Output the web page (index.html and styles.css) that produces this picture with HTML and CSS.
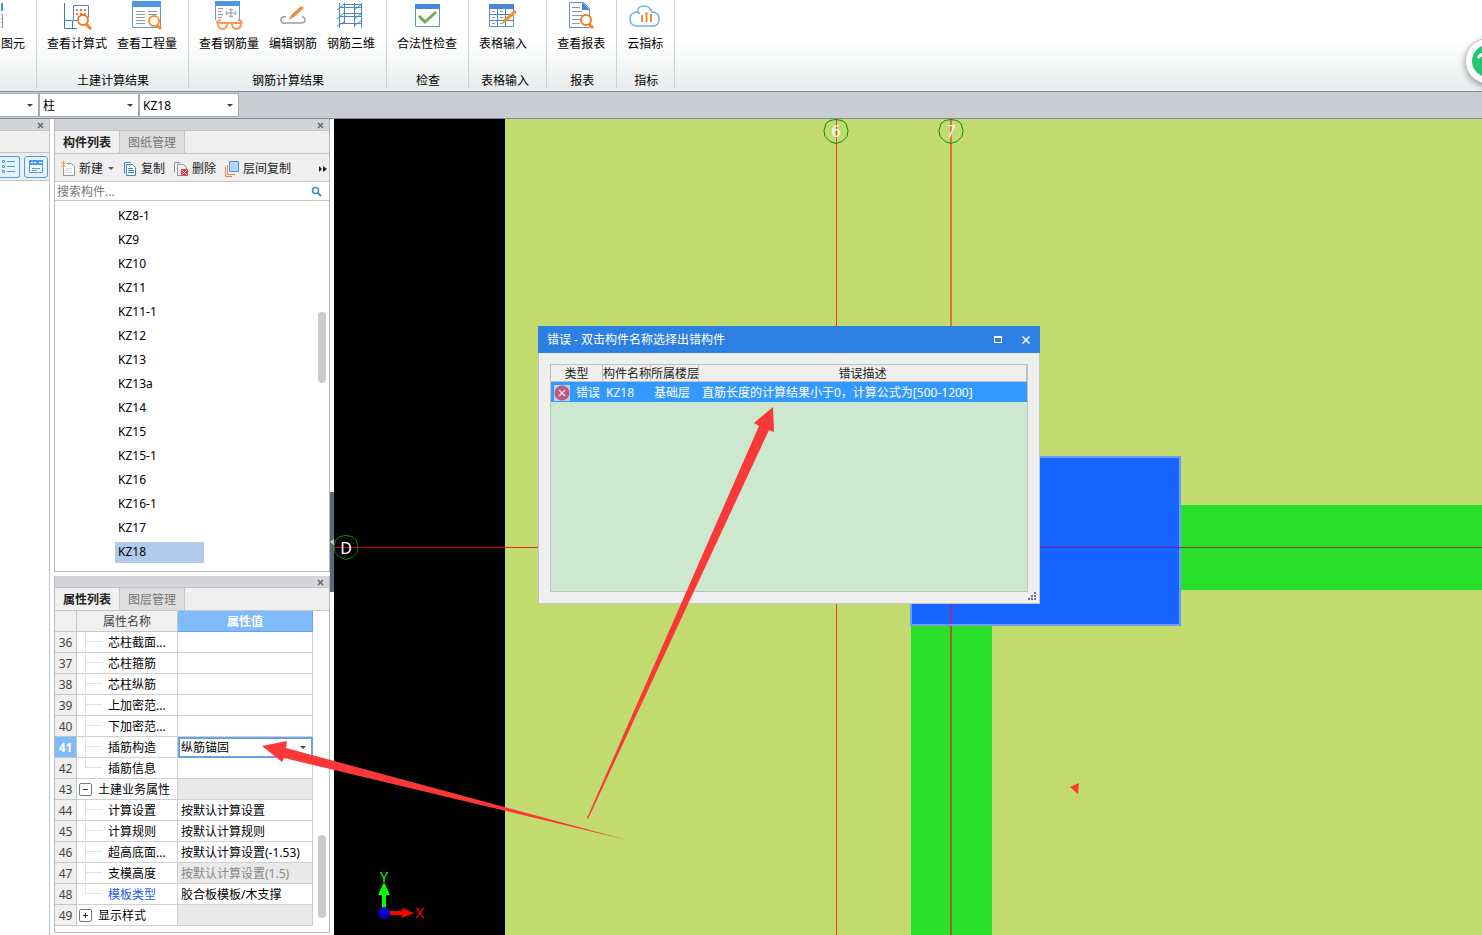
FILE: index.html
```html
<!DOCTYPE html>
<html lang="zh-CN">
<head>
<meta charset="utf-8">
<title>构件建模</title>
<link rel="stylesheet" href="styles.css">
</head>
<body>
<header class="ribbon">
  <section class="group group-cut">
    <div class="tools"><button class="tool"><svg width="24" height="32"><path d="M0 3h2v8H0z" fill="#4a90e2"/><path d="M0 14.500h1.500v13H0M0 18.500h1M0 22.500h1" fill="none" stroke="#8b98a5"/></svg><span>图元</span></button></div>
  </section>
  <section class="group">
    <div class="tools">
      <button class="tool"><svg width="32" height="32"><path d="M3.500 3v25.500H16M3.500 20.500h8v8" fill="none" stroke="#3b7dc4"/><path d="M16 20.500h-3.500v-15h15v12" fill="none" stroke="#4a86c8"/><path d="M15 9h2v2h-2zM19 9h2v2h-2zM23 9h2v2h-2zM15 13h2v2h-2zM19 13h2v2h-2zM23 13h2v2h-2z" fill="#e8743a"/><circle cx="22" cy="20" r="5" fill="#fff" stroke="#f07c28" stroke-width="2"/><path d="M25 24l5 5" stroke="#f07c28" stroke-width="3"/></svg><span>查看计算式</span></button>
      <button class="tool"><svg width="32" height="32"><path d="M1.500 1.500h28v26h-28z" fill="#fff" stroke="#5b9be0"/><path d="M1 1h29v6H1z" fill="#4f95e3"/><path d="M5 11.500h9m3 0h9M5 14.500h9m3 0h9M5 17.500h9M5 20.500h9M5 23.500h9" stroke="#8d98a4"/><circle cx="23" cy="21" r="5" fill="#fff" stroke="#f0942c" stroke-width="2"/><path d="M26 25l4 4" stroke="#f0942c" stroke-width="3"/></svg><span>查看工程量</span></button>
    </div>
    <div class="group-name">土建计算结果</div>
  </section>
  <section class="group">
    <div class="tools">
      <button class="tool"><svg width="32" height="32"><path d="M2.500 20V2h24v18" fill="#fff" stroke="#5b9be0"/><path d="M2 1h25v5H2z" fill="#4f95e3"/><path d="M5 8.500h5M5 11.500h3M5 14.500h5M5 17.500h4" stroke="#8d98a4"/><path d="M13 13h10M18 9v8M16 10q2-2 4 0M16 16q2 2 4 0M14 11q-2 2 0 4M22 11q2 2 0 4" fill="none" stroke="#8d98a4"/><g fill="none" stroke="#f49a5c" stroke-width="2"><path d="M5 23h9q0 6-4.500 6T5 23zM19 23h9q0 6-4.500 6T19 23zM14 24q2.500-2 5 0M5 24q-3-3 3-4M28 24q3-3-3-4"/></g></svg><span>查看钢筋量</span></button>
      <button class="tool"><svg width="32" height="32"><path d="M9 17q-5-1-5 3t5 3h15q4 0 4-3t-3-3" fill="none" stroke="#96a0aa" stroke-width="1.500"/><path d="M12 20l2-5L24 6l3 2-10 9z" fill="#f08a42"/></svg><span>编辑钢筋</span></button>
      <button class="tool"><svg width="32" height="32"><path d="M4.500 3v25M9.500 3v20M19.500 3v24M26.500 3v25M4 7.500h23M4 16.500h23M4 23.500h23M8 4.500h18M8 13.500h18M2 10l7-6M2 19l7-6M2 26l7-4M19 10l8-6M19 19l8-6M19 26l8-6" fill="none" stroke="#4a86c8"/></svg><span>钢筋三维</span></button>
    </div>
    <div class="group-name">钢筋计算结果</div>
  </section>
  <section class="group">
    <div class="tools">
      <button class="tool"><svg width="32" height="32"><path d="M4.500 4.500h24v22h-24z" fill="#fff" stroke="#5b8fcf"/><path d="M4 4h25v5H4z" fill="#4a86d8"/><path d="M8 16l6 6L25 12" fill="none" stroke="#74ad4e" stroke-width="3"/></svg><span>合法性检查</span></button>
    </div>
    <div class="group-name">检查</div>
  </section>
  <section class="group group-table">
    <div class="tools">
      <button class="tool"><svg width="32" height="32"><path d="M2.500 4.500h24v22h-24z" fill="#fff" stroke="#5b8fcf"/><path d="M2 4h25v5H2z" fill="#4a86d8"/><path d="M3 14.500h23M3 20.500h23M10.500 9v17M18.500 9v17" stroke="#4a86c8"/><path d="M5 11.500h3M13 11.500h3M5 17.500h3M13 17.500h3M5 23.500h3M13 23.500h3" stroke="#8d98a4"/><path d="M15 24l2-5L28 10l2 2-11 10z" fill="#f0942c"/></svg><span>表格输入</span></button>
    </div>
    <div class="group-name">表格输入</div>
  </section>
  <section class="group">
    <div class="tools">
      <button class="tool"><svg width="32" height="32"><path d="M4.500 2.500h14l6 6v19h-20z" fill="#fff" stroke="#5b8fcf"/><path d="M17 2l8 8h-8z" fill="#3f82d8"/><path d="M7 7.500h8M7 11.500h10M7 15.500h14M7 19.500h8M7 23.500h8" stroke="#8d98a4"/><circle cx="21" cy="20" r="5" fill="#fff" stroke="#f07c28" stroke-width="2"/><path d="M24 24l4 4" stroke="#f07c28" stroke-width="3"/></svg><span>查看报表</span></button>
    </div>
    <div class="group-name">报表</div>
  </section>
  <section class="group">
    <div class="tools">
      <button class="tool"><svg width="32" height="32"><path d="M9 12Q8 6 15 6q6 0 8 6 7 0 7 7 0 7-6 7H7q-6-1-6-7 0-7 8-7l2 2" fill="#fff" stroke="#6eb0f5" stroke-width="1.500"/><path d="M13 15v7M17.500 12v10M22 14v8" stroke="#f08a42" stroke-width="2"/></svg><span>云指标</span></button>
    </div>
    <div class="group-name">指标</div>
  </section>
</header>

<nav class="filters">
  <label class="pick pick-short"><select aria-label="楼层"><option></option></select></label>
  <label class="pick"><select aria-label="构件类型"><option>柱</option></select></label>
  <label class="pick"><select aria-label="构件"><option>KZ18</option></select></label>
</nav>

<main class="workspace">
  <aside class="nav-panel">
    <div class="title-bar"><button class="close" aria-label="关闭导航"><svg width="7" height="7"><path d="M1 1l5 5M6 1L1 6" stroke="#666" stroke-width="1.500"/></svg></button></div>
    <div class="nav-head"></div>
    <div class="nav-tools">
      <button class="view view-cut" aria-label="列表视图"><svg width="16" height="16" fill="none" stroke="#4f9ae8"><path d="M2.500 1.500h2v2h-2zM2.500 6.500h2v2h-2zM2.500 11.500h2v2h-2zM7 2.500h8M7 7.500h8M7 12.500h8"/></svg></button>
      <button class="view" aria-label="面板视图"><svg width="16" height="16"><path d="M1.500 1.500h13v12h-13z" fill="#fff" stroke="#4f9ae8"/><path d="M1 1h14v5H1z" fill="#4f9ae8"/><path d="M3 3.500h2m1 0h2m3 0h3" stroke="#fff"/><path d="M4 9.500h8M4 11.500h5" stroke="#4f9ae8"/></svg></button>
    </div>
  </aside>

  <div class="side">
    <section class="panel components">
      <div class="title-bar"><button class="close" aria-label="关闭构件列表"><svg width="7" height="7"><path d="M1 1l5 5M6 1L1 6" stroke="#666" stroke-width="1.500"/></svg></button></div>
      <div class="tabs"><button class="tab active">构件列表</button><button class="tab">图纸管理</button></div>
      <div class="actions">
        <button class="action"><svg width="16" height="16"><path d="M3.500 5v9.500h11v-9l-3-3H7" fill="#fff" stroke="#8d98a4"/><path d="M6 7.500h6M6 9.500h6M6 11.500h6" stroke="#d0d4d8"/><path d="M1 1l5 5M6 1L1 6M3.500 0v7" stroke="#f0a030"/></svg>新建<i class="caret"></i></button>
        <button class="action"><svg width="16" height="16"><path d="M2.500 12.500v-11h6" fill="none" stroke="#3c84cc"/><path d="M4.500 3.500h6l3 3v8h-9z" fill="#fff" stroke="#3c84cc"/><path d="M6 7.500h5M6 9.500h6M6 11.500h6" stroke="#3c84cc"/></svg>复制</button>
        <button class="action"><svg width="16" height="16"><path d="M1.500 11.500v-10h6M8 14.500H4.500v-11h6l3 3V8" fill="none" stroke="#8d98a4"/><path d="M8 8h7v7H8z" fill="#d84848"/><path d="M9.500 9.500l4 4m0-4l-4 4" stroke="#fff"/></svg>删除</button>
        <button class="action"><svg width="16" height="16"><path d="M1.500 6v9.500H8M3.500 4v9.500H11" fill="none" stroke="#e88844"/><path d="M5.500.500h9v10h-9z" fill="#b5d8fa" stroke="#4a90e2"/></svg>层间复制</button>
        <button class="more" aria-label="更多"><svg width="8" height="6"><path d="M0 0l3 3-3 3zM4 0l4 3-4 3z" fill="#222"/></svg></button>
      </div>
      <div class="search"><input type="text" placeholder="搜索构件..." aria-label="搜索构件"><svg width="11" height="11"><circle cx="4.500" cy="4.500" r="3" fill="none" stroke="#3b90d0" stroke-width="1.500"/><path d="M7 7l3 3" stroke="#3b90d0" stroke-width="2"/></svg></div>
      <div class="list-area">
        <ul class="list">
          <li><button>KZ8-1</button></li><li><button>KZ9</button></li><li><button>KZ10</button></li><li><button>KZ11</button></li><li><button>KZ11-1</button></li><li><button>KZ12</button></li><li><button>KZ13</button></li><li><button>KZ13a</button></li><li><button>KZ14</button></li><li><button>KZ15</button></li><li><button>KZ15-1</button></li><li><button>KZ16</button></li><li><button>KZ16-1</button></li><li><button>KZ17</button></li><li><button class="selected">KZ18</button></li>
        </ul>
        <div class="thumb thumb-list"></div>
      </div>
    </section>

    <section class="panel properties">
      <div class="title-bar"><button class="close" aria-label="关闭属性列表"><svg width="7" height="7"><path d="M1 1l5 5M6 1L1 6" stroke="#666" stroke-width="1.500"/></svg></button></div>
      <div class="tabs"><button class="tab active">属性列表</button><button class="tab">图层管理</button></div>
      <div class="grid-area">
        <table class="grid">
          <thead><tr><th class="num"></th><th class="name">属性名称</th><th class="value">属性值</th></tr></thead>
          <tbody>
            <tr><th>36</th><td class="child">芯柱截面...</td><td></td></tr>
            <tr><th>37</th><td class="child">芯柱箍筋</td><td></td></tr>
            <tr><th>38</th><td class="child">芯柱纵筋</td><td></td></tr>
            <tr><th>39</th><td class="child">上加密范...</td><td></td></tr>
            <tr><th>40</th><td class="child">下加密范...</td><td></td></tr>
            <tr class="current"><th>41</th><td class="child">插筋构造</td><td class="edit"><label class="cell-pick"><select aria-label="插筋构造"><option>纵筋锚固</option></select></label></td></tr>
            <tr><th>42</th><td class="child last">插筋信息</td><td></td></tr>
            <tr><th>43</th><td class="parent"><button class="fold" aria-label="收起"><svg width="11" height="11"><path d="M3 5.500h5" stroke="#333"/></svg></button>土建业务属性</td><td class="off"></td></tr>
            <tr><th>44</th><td class="child">计算设置</td><td>按默认计算设置</td></tr>
            <tr><th>45</th><td class="child">计算规则</td><td>按默认计算规则</td></tr>
            <tr><th>46</th><td class="child">超高底面...</td><td>按默认计算设置(-1.53)</td></tr>
            <tr><th>47</th><td class="child">支模高度</td><td class="off">按默认计算设置(1.5)</td></tr>
            <tr><th>48</th><td class="child last blue">模板类型</td><td>胶合板模板/木支撑</td></tr>
            <tr><th>49</th><td class="parent"><button class="fold" aria-label="展开"><svg width="11" height="11"><path d="M3 5.500h5M5.500 3v5" stroke="#333"/></svg></button>显示样式</td><td class="off"></td></tr>
          </tbody>
        </table>
        <div class="thumb thumb-grid"></div>
      </div>
    </section>
  </div>

  <div class="splitter"><button class="collapse" aria-label="折叠面板"><svg width="4" height="6"><path d="M4 0v6L0 3z" fill="#c8ccd2"/></svg></button></div>

  <section class="canvas">
    <svg class="drawing" width="100%" height="100%">
      <rect width="171" height="100%" fill="#000"/>
      <rect x="847" y="386" width="100%" height="85" fill="#2adf2a"/>
      <rect x="577" y="507" width="81" height="100%" fill="#2adf2a"/>
      <rect x="577" y="338" width="269" height="168" fill="#1764ff" stroke="#6e9cf2" stroke-width="2"/>
      <rect x="0" y="428" width="171" height="1" fill="#d00000"/>
      <rect x="171" y="428" width="406" height="1" fill="#f03018"/>
      <rect x="577" y="428" width="270" height="1" fill="#6a2496"/>
      <rect x="847" y="428" width="100%" height="1" fill="#864012"/>
      <rect x="502" y="0" width="1" height="100%" fill="#f53c1c"/>
      <rect x="616" y="0" width="2" height="338" fill="#e0703a"/>
      <rect x="616" y="339" width="2" height="166" fill="#8a3590"/>
      <rect x="616" y="507" width="2" height="100%" fill="#a0641e"/>
      <g fill="none" stroke="#0c8c0c">
        <path id="bubble" d="M502 .500l6 1 4 3 2 7-1 6-5 5-6 2-6-2-5-5-1-6 2-7 4-3z"/>
        <use href="#bubble" x="115"/>
        <use href="#bubble" x="-490" y="416"/>
      </g>
      <g fill="#fff" font-size="16" text-anchor="middle">
        <text x="502" y="18">6</text><text x="617" y="18">7</text><text x="12" y="435">D</text>
      </g>
      <path d="M50 794v-19" stroke="#0f0" stroke-width="4"/><path d="M50 763l6 13H44z" fill="#0f0"/>
      <path d="M50 794h18" stroke="#f00" stroke-width="4"/><path d="M80 794l-12-5v10z" fill="#f00"/>
      <circle cx="50" cy="794" r="6" fill="#0000c0"/>
      <g font-size="15" text-anchor="middle"><text x="50" y="763" fill="#0f0">Y</text><text x="86" y="799" fill="#f00">X</text></g>
    </svg>

    <section class="dialog" role="dialog" aria-labelledby="dlg-title">
      <div class="dialog-bar"><h2 id="dlg-title">错误 - 双击构件名称选择出错构件</h2>
        <button aria-label="最大化"><svg width="8" height="7"><path d="M0 0h8v7H0zM1 2v4h6V2z" fill="#fff" fill-rule="evenodd"/></svg></button>
        <button aria-label="关闭"><svg width="8" height="8"><path d="M.5.500l7 7M7.500.500l-7 7" stroke="#fff" stroke-width="1.500"/></svg></button>
      </div>
      <div class="dialog-body">
        <table class="errors">
          <thead><tr><th class="c-type">类型</th><th class="c-name">构件名称</th><th class="c-floor">所属楼层</th><th>错误描述</th></tr></thead>
          <tbody><tr><td><span class="kind"><svg width="16" height="16"><path d="M0 0h16v16H0z" fill="#b8d2f0"/><circle cx="8" cy="8" r="7.500" fill="#c0567a"/><path d="M5 5l6 6m0-6l-6 6" stroke="#e8d8f0" stroke-width="1.500"/></svg>错误</span></td><td>KZ18</td><td>基础层</td><td>直筋长度的计算结果小于0，计算公式为[500-1200]</td></tr></tbody>
        </table>
      </div>
      <svg class="grip" width="8" height="8"><path d="M6 0h2v2H6zM3 3h2v2H3zM6 3h2v2H6zM0 6h2v2H0zM3 6h2v2H3zM6 6h2v2H6z" fill="#69737d"/></svg>
    </section>
  </section>
</main>

<button class="assistant" aria-label="助手"><svg width="44" height="44"><circle cx="22" cy="22" r="16" fill="#25c872"/><path d="M12 19q4-6 10-3" fill="none" stroke="#fff" stroke-width="3"/></svg></button>

<svg class="marks" width="1100" height="860">
  <g fill="#fb3838"><path d="M773 407l1 25-5-2L588 819l-1-1L759 426l-5-3z"/><path d="M262 746l25-5-1 7 341 92-343-82-2 4z"/><path d="M1070 787l9-4-1 11z"/></g>
</svg>
</body>
</html>
```

FILE: styles.css
```css
* { box-sizing: border-box; }

body {
  margin: 0;
  height: 100vh;
  display: flex;
  flex-direction: column;
  position: relative;
  overflow: hidden;
  background: #fff;
  color: #000;
  font: 12px/16px "Noto Sans", "Noto Sans CJK SC", sans-serif;
}

button, select, input { font: inherit; color: inherit; margin: 0; padding: 0; border: 0; background: none; border-radius: 0; }
svg { display: block; flex: none; }

/* Ribbon */
.ribbon {
  display: flex;
  flex: none;
  height: 92px;
  padding-bottom: 3px;
  border-bottom: 1px solid #8a8e92;
  background: linear-gradient(#fff 45%, #e8ecec);
}
.group {
  display: flex;
  flex-direction: column;
  justify-content: space-between;
  padding: 0 11px 0 10px;
  border-right: 1px solid #ccd0d2;
}
.group-table { padding-right: 17px; }
.group-cut { padding: 0 11px 0 1px; }
.tools { display: flex; gap: 10px; }
.tool { display: flex; flex-direction: column; align-items: center; gap: 4px; white-space: nowrap; }
.group-cut .tool { align-items: flex-start; }
.group-name { height: 16px; line-height: 18px; text-align: center; padding-left: 2px; }

/* Filter row */
.filters {
  display: flex;
  flex: none;
  height: 27px;
  padding: 1px 0;
  background: #c9ccd1;
  border-bottom: 1px solid #858a92;
}
.pick { position: relative; width: 100px; border: 1px solid #a9acb0; background: #fff; }
.pick-short { width: 39px; border-left: 0; }
.pick select, .cell-pick select { appearance: none; width: 100%; height: 100%; padding: 2px 0 0 3px; }
.pick::after, .cell-pick::after {
  content: "";
  position: absolute;
  right: 5px;
  top: 10px;
  border: 3px solid transparent;
  border-top-color: #444;
  border-bottom: 0;
}

.workspace { display: flex; flex: 1; min-height: 0; }

.title-bar {
  display: flex;
  flex: none;
  justify-content: flex-end;
  align-items: center;
  height: 12px;
  padding: 2px 5px 0 0;
  background: #d3d5da;
  border-bottom: 1px solid #c2c5ca;
}
.close { display: flex; }

/* Navigation strip */
.nav-panel { flex: none; width: 50px; border-right: 1px solid #bfc2c7; }
.nav-head { height: 22px; background: #efefef; border-bottom: 1px solid #c2c5ca; }
.nav-tools { display: flex; gap: 4px; padding: 3px 0 2px; height: 28px; background: #efefef; border-bottom: 1px solid #c2c5ca; }
.view { display: grid; place-items: center; width: 24px; height: 22px; border: 1px solid #4f9ae8; border-radius: 3px; background: #e6f2fe; }
.view-cut { justify-items: start; width: 20px; border-left: 0; border-radius: 0 3px 3px 0; }

/* Side panels */
.side { display: flex; flex-direction: column; flex: none; width: 276px; margin-left: 4px; gap: 4px; background: #fff; }
.panel { display: flex; flex-direction: column; border: 1px solid #b4b7bc; border-top: 0; }
.components { flex: 453; }
.properties { flex: 357; margin-bottom: 2px; }
.tabs { display: flex; flex: none; height: 23px; background: #efefef; border-bottom: 1px solid #c2c5ca; }
.tab { width: 65px; padding-top: 2px; color: #777; background: #dedede; border-right: 1px solid #c2c5ca; }
.tab.active { color: #222; background: #f0f0f0; font-weight: 700; }
.actions { display: flex; flex: none; align-items: center; gap: 8px; height: 28px; padding: 2px 2px 0 5px; background: #efefef; border-bottom: 1px solid #c2c5ca; }
.action { display: flex; align-items: center; gap: 3px; white-space: nowrap; color: #222; }
.caret { margin-left: 2px; border: 3px solid transparent; border-top-color: #555; border-bottom: 0; }
.more { display: flex; margin-left: auto; }
.search { display: flex; flex: none; align-items: center; height: 19px; padding: 0 7px 0 2px; border-bottom: 1px solid #c2c5ca; }
.search input { flex: 1; min-width: 0; padding-top: 2px; outline: 0; }
.search input::placeholder { color: #777; opacity: 1; }
.list-area { position: relative; flex: 1; min-height: 0; }
.list { list-style: none; margin: 0; padding: 3px 0 0 60px; }
.list li { display: flex; align-items: center; height: 24px; }
.list button { width: 89px; height: 21px; padding-left: 3px; text-align: left; }
.list .selected { background: #b1cbec; }
.thumb { position: absolute; right: 3px; width: 8px; border-radius: 4px; background: #cacaca; }
.thumb-list { top: 30%; height: 71px; }
.thumb-grid { bottom: 14px; height: 83px; }

/* Property grid */
.grid-area { position: relative; flex: 1; min-height: 0; }
.grid { width: 258px; table-layout: fixed; border-collapse: separate; border-spacing: 0; }
.grid th, .grid td { height: 21px; padding: 2px 0 0; border: 0 solid #d0d0d0; border-width: 0 1px 1px 0; white-space: nowrap; }
.grid th { font-weight: 400; background: #f0f0f0; color: #444; border-color: #c6c6c6; }
.grid td:last-child { padding-left: 3px; }
.grid .num { width: 22px; }
.grid .name { width: 101px; }
.grid .value { background: #7fbafb; color: #fff; font-weight: 700; border-color: #67a3e8; }
.grid .off { background: #e9e9e9; color: #888; }
.grid .current th { background: #7fbafb; color: #fff; font-weight: 700; }
.grid .edit, .grid .edit:last-child { padding: 0; border: 2px solid #65a3e8; }
.cell-pick { position: relative; display: block; height: 17px; }
.cell-pick select { padding: 1px 0 0 1px; }
.cell-pick::after { top: 7px; }
.grid .child { position: relative; padding-left: 31px; }
.grid .blue { color: #1f5cf0; }
.child::before { content: ""; position: absolute; left: 8px; top: 0; width: 1px; height: 21px; background: #e2e2e2; }
.child.last::before { height: 10px; }
.child::after { content: ""; position: absolute; left: 8px; top: 9px; width: 17px; height: 1px; background: #e2e2e2; }
.fold { display: inline-block; width: 13px; height: 13px; margin: 0 6px 0 2px; border: 1px solid #777; border-radius: 2px; background: #fff; vertical-align: -1px; }

.splitter { display: flex; align-items: center; flex: none; width: 4px; padding-top: 30px; }
.collapse { display: grid; place-items: center; width: 4px; height: 100px; background: #5d6875; }

/* Model view */
.canvas { position: relative; flex: 1; min-width: 0; overflow: hidden; background: #c1db6f; }
.drawing { position: absolute; inset: 0; }
.dialog { position: absolute; left: 204px; top: 207px; width: 502px; background: #efefef; border: 1px solid #c0c4cc; border-top: 0; }
.dialog-bar { display: flex; align-items: center; gap: 20px; height: 27px; margin: 0 -1px; padding: 0 10px 0 9px; color: #fff; background: #2d7fe1; }
.dialog-bar h2 { flex: 1; margin: 0; font-size: 12px; font-weight: 400; }
.dialog-bar button { display: flex; }
.dialog-body { margin: 11px; height: 228px; border: 1px solid #c0c0c0; background: #cce8cf; }
.errors { width: 100%; table-layout: fixed; border-collapse: separate; border-spacing: 0; }
.errors th { height: 17px; padding: 2px 0 0; font-weight: 400; line-height: 14px; color: #222; background: #efefef; border: 0 solid #c0c0c0; border-width: 0 1px 1px 0; white-space: nowrap; }
.errors td { height: 20px; padding: 2px 0 0 3px; color: #fff; background: #39f; white-space: nowrap; }
.kind { display: flex; align-items: center; gap: 6px; }
.c-type { width: 52px; }
.c-name { width: 48px; }
.c-floor { width: 48px; }
.grip { position: absolute; right: 3px; bottom: 3px; }

.assistant { position: absolute; right: -29px; top: 38px; border-radius: 50%; background: #fff; border: 1px solid #c8c8c8; box-shadow: 0 2px 6px #0006; }
.marks { position: absolute; left: 0; top: 0; pointer-events: none; }
```
